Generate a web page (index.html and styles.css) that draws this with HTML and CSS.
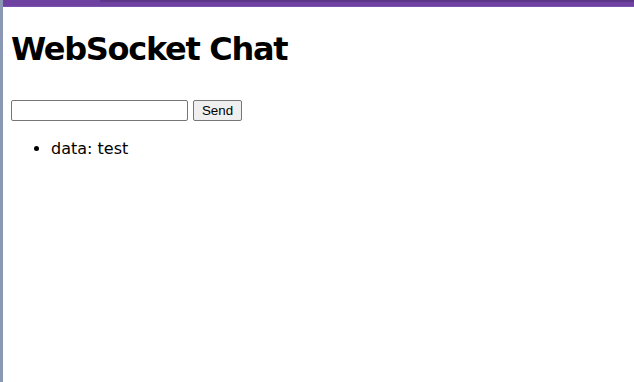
FILE: index.html
```html
<!DOCTYPE html>
<html lang="en">
<head>
    <meta charset="UTF-8" />
    <meta name="viewport" content="width=device-width, initial-scale=1.0" />
    <title>WebSocket Chat</title>
    <link rel="stylesheet" href="styles.css">
</head>
<body>
    <div class="frame">
        <div class="titlebar"><div class="titlebar-dark"></div></div>
        <div class="page">
            <h1>WebSocket Chat</h1>
            <form class="send-form" onsubmit="return false;">
                <input type="text" id="messageText" autocomplete="off" />
                <button>Send</button>
            </form>
            <ul id="messages">
                <li>data: test</li>
            </ul>
        </div>
    </div>
</body>
</html>
```

FILE: styles.css
```css
body {
    margin: 0;
    font-family: "DejaVu Sans", Verdana, sans-serif;
    background: #ffffff;
}
.frame {
    min-height: 100vh;
    border-left: 3px solid #8a98b4;
    box-sizing: border-box;
}
.titlebar {
    height: 7px;
    background: #6f42a1;
    border-bottom: 1px solid #7d52b3;
    box-sizing: border-box;
    padding-left: 97px;
}
.titlebar-dark {
    height: 2px;
    background: #5b3689;
}
.page {
    margin: 8px;
}
h1 {
    font-size: 32px;
    font-weight: bold;
    letter-spacing: -1.3px;
    line-height: 41px;
    margin: 22px 0 30px;
}
.send-form {
    display: flex;
    align-items: center;
    gap: 5px;
}
input, button {
    font-family: "Liberation Sans", Arial, sans-serif;
    font-size: 13.33px;
}
#messageText {
    width: 177px;
    height: 21px;
    padding: 1px 2px;
    border: 1px solid #767676;
    border-radius: 2px;
    box-sizing: border-box;
    margin: 0;
}
button {
    width: 49px;
    height: 21px;
    padding: 0;
    margin: 0;
    border: 1px solid #767676;
    border-radius: 2px;
    background: #efefef;
    color: #000;
}
#messages {
    padding-left: 40px;
    line-height: 24px;
}
```
